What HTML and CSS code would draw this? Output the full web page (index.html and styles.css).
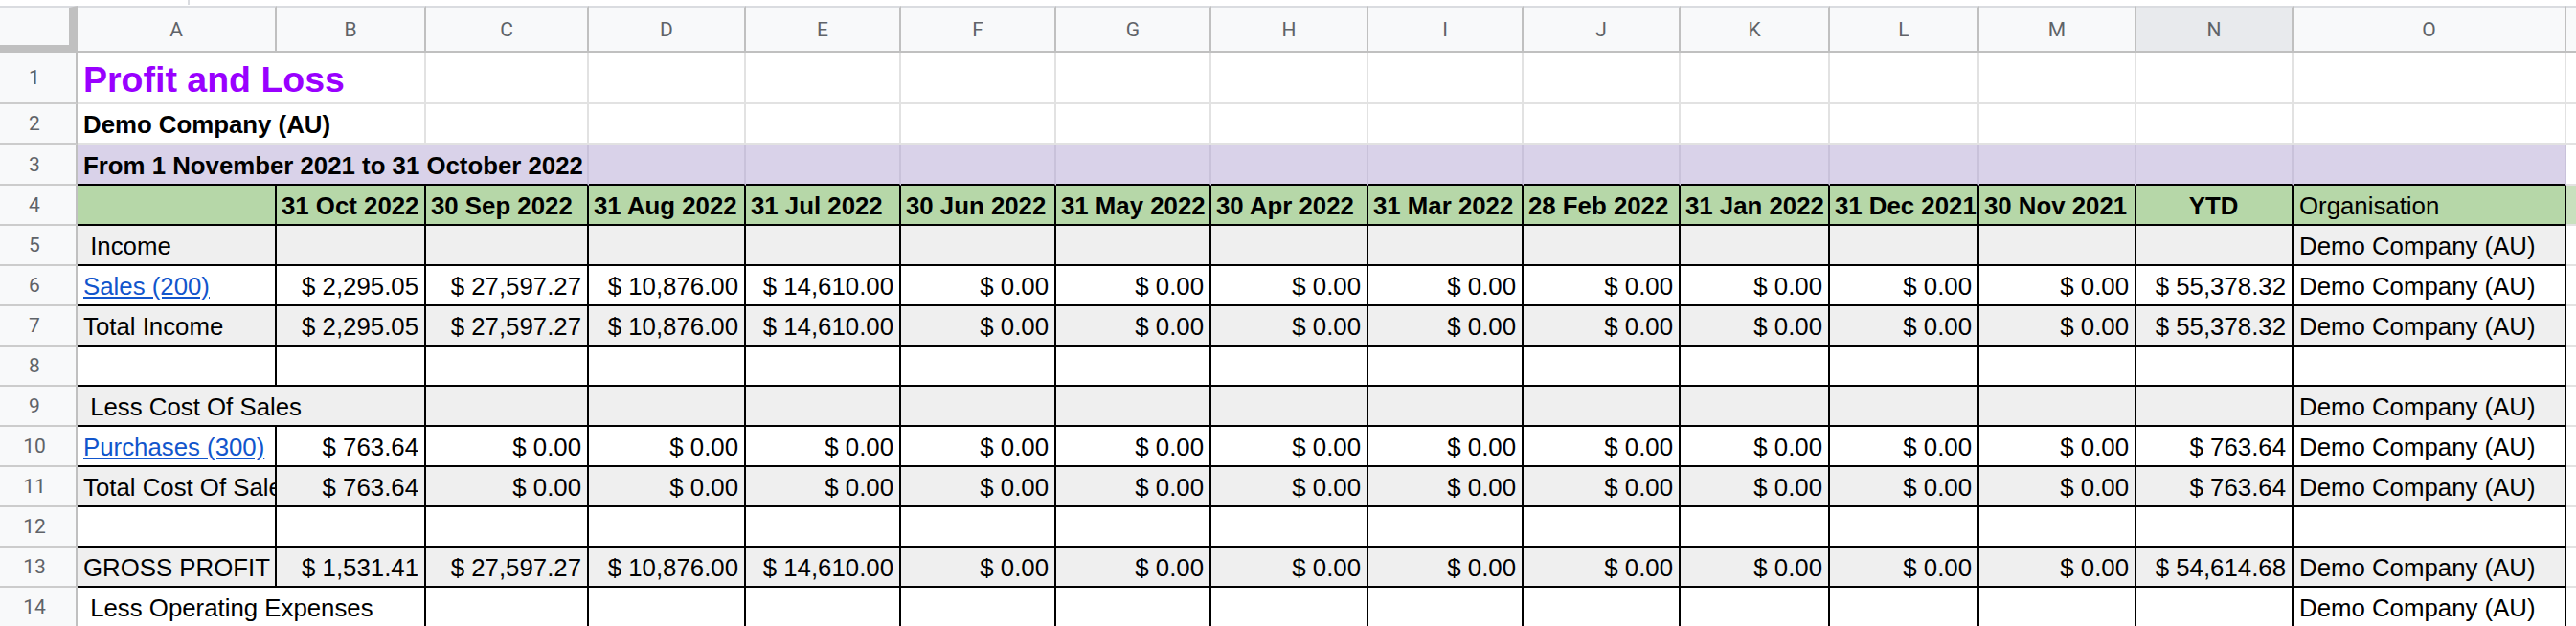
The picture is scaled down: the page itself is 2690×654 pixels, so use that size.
FILE: index.html
```html
<!DOCTYPE html>
<html lang="en">
<head>
<meta charset="utf-8">
<title>Profit and Loss</title>
<link rel="stylesheet" href="styles.css">
</head>
<body>
<div class="topbar"><div class="topbar-gap"></div><div class="topbar-tick"></div></div>
<div class="sheet">
  <!-- column headers -->
  <div class="corner"></div>
  <div class="colh">A</div><div class="colh">B</div><div class="colh">C</div><div class="colh">D</div><div class="colh">E</div><div class="colh">F</div><div class="colh">G</div><div class="colh">H</div><div class="colh">I</div><div class="colh">J</div><div class="colh">K</div><div class="colh">L</div><div class="colh">M</div><div class="colh sel">N</div><div class="colh">O</div><div class="colh px"></div>

  <!-- row 1 -->
  <div class="rh">1</div>
  <div class="cell title span2">Profit and Loss</div>
  <div class="cell"></div><div class="cell"></div><div class="cell"></div><div class="cell"></div><div class="cell"></div><div class="cell"></div><div class="cell"></div><div class="cell"></div><div class="cell"></div><div class="cell"></div><div class="cell"></div><div class="cell"></div><div class="cell"></div>
  <div class="cell px"></div>

  <!-- row 2 -->
  <div class="rh">2</div>
  <div class="cell bold span2">Demo Company (AU)</div>
  <div class="cell"></div><div class="cell"></div><div class="cell"></div><div class="cell"></div><div class="cell"></div><div class="cell"></div><div class="cell"></div><div class="cell"></div><div class="cell"></div><div class="cell"></div><div class="cell"></div><div class="cell"></div><div class="cell"></div>
  <div class="cell px"></div>

  <!-- row 3 -->
  <div class="rh">3</div>
  <div class="cell pu bold span3">From 1 November 2021 to 31 October 2022</div>
  <div class="cell pu"></div><div class="cell pu"></div><div class="cell pu"></div><div class="cell pu"></div><div class="cell pu"></div><div class="cell pu"></div><div class="cell pu"></div><div class="cell pu"></div><div class="cell pu"></div><div class="cell pu"></div><div class="cell pu"></div><div class="cell pu"></div>
  <div class="cell px"></div>

  <!-- row 4 -->
  <div class="rh">4</div>
  <div class="cell k hd"></div>
  <div class="cell k hd">31 Oct 2022</div>
  <div class="cell k hd">30 Sep 2022</div>
  <div class="cell k hd">31 Aug 2022</div>
  <div class="cell k hd">31 Jul 2022</div>
  <div class="cell k hd">30 Jun 2022</div>
  <div class="cell k hd">31 May 2022</div>
  <div class="cell k hd">30 Apr 2022</div>
  <div class="cell k hd">31 Mar 2022</div>
  <div class="cell k hd">28 Feb 2022</div>
  <div class="cell k hd">31 Jan 2022</div>
  <div class="cell k hd">31 Dec 2021</div>
  <div class="cell k hd">30 Nov 2021</div>
  <div class="cell k hd ctr">YTD</div>
  <div class="cell k hd org">Organisation</div>
  <div class="cell px hdp"></div>

  <!-- row 5 -->
  <div class="rh">5</div>
  <div class="cell k gy"> Income</div>
  <div class="cell k gy"></div><div class="cell k gy"></div><div class="cell k gy"></div><div class="cell k gy"></div><div class="cell k gy"></div><div class="cell k gy"></div><div class="cell k gy"></div><div class="cell k gy"></div><div class="cell k gy"></div><div class="cell k gy"></div><div class="cell k gy"></div><div class="cell k gy"></div><div class="cell k gy"></div>
  <div class="cell k gy">Demo Company (AU)</div>
  <div class="cell px"></div>

  <!-- row 6 -->
  <div class="rh">6</div>
  <div class="cell k"><a class="lnk" href="#">Sales (200)</a></div>
  <div class="cell k num">$ 2,295.05</div>
  <div class="cell k num">$ 27,597.27</div>
  <div class="cell k num">$ 10,876.00</div>
  <div class="cell k num">$ 14,610.00</div>
  <div class="cell k num">$ 0.00</div><div class="cell k num">$ 0.00</div><div class="cell k num">$ 0.00</div><div class="cell k num">$ 0.00</div><div class="cell k num">$ 0.00</div><div class="cell k num">$ 0.00</div><div class="cell k num">$ 0.00</div><div class="cell k num">$ 0.00</div>
  <div class="cell k num">$ 55,378.32</div>
  <div class="cell k">Demo Company (AU)</div>
  <div class="cell px"></div>

  <!-- row 7 -->
  <div class="rh">7</div>
  <div class="cell k gy">Total Income</div>
  <div class="cell k gy num">$ 2,295.05</div>
  <div class="cell k gy num">$ 27,597.27</div>
  <div class="cell k gy num">$ 10,876.00</div>
  <div class="cell k gy num">$ 14,610.00</div>
  <div class="cell k gy num">$ 0.00</div><div class="cell k gy num">$ 0.00</div><div class="cell k gy num">$ 0.00</div><div class="cell k gy num">$ 0.00</div><div class="cell k gy num">$ 0.00</div><div class="cell k gy num">$ 0.00</div><div class="cell k gy num">$ 0.00</div><div class="cell k gy num">$ 0.00</div>
  <div class="cell k gy num">$ 55,378.32</div>
  <div class="cell k gy">Demo Company (AU)</div>
  <div class="cell px"></div>

  <!-- row 8 -->
  <div class="rh">8</div>
  <div class="cell k"></div><div class="cell k"></div><div class="cell k"></div><div class="cell k"></div><div class="cell k"></div><div class="cell k"></div><div class="cell k"></div><div class="cell k"></div><div class="cell k"></div><div class="cell k"></div><div class="cell k"></div><div class="cell k"></div><div class="cell k"></div><div class="cell k"></div><div class="cell k"></div>
  <div class="cell px"></div>

  <!-- row 9 -->
  <div class="rh">9</div>
  <div class="cell k gy span2"> Less Cost Of Sales</div>
  <div class="cell k gy"></div><div class="cell k gy"></div><div class="cell k gy"></div><div class="cell k gy"></div><div class="cell k gy"></div><div class="cell k gy"></div><div class="cell k gy"></div><div class="cell k gy"></div><div class="cell k gy"></div><div class="cell k gy"></div><div class="cell k gy"></div><div class="cell k gy"></div>
  <div class="cell k gy">Demo Company (AU)</div>
  <div class="cell px"></div>

  <!-- row 10 -->
  <div class="rh">10</div>
  <div class="cell k"><a class="lnk" href="#">Purchases (300)</a></div>
  <div class="cell k num">$ 763.64</div>
  <div class="cell k num">$ 0.00</div><div class="cell k num">$ 0.00</div><div class="cell k num">$ 0.00</div><div class="cell k num">$ 0.00</div><div class="cell k num">$ 0.00</div><div class="cell k num">$ 0.00</div><div class="cell k num">$ 0.00</div><div class="cell k num">$ 0.00</div><div class="cell k num">$ 0.00</div><div class="cell k num">$ 0.00</div><div class="cell k num">$ 0.00</div>
  <div class="cell k num">$ 763.64</div>
  <div class="cell k">Demo Company (AU)</div>
  <div class="cell px"></div>

  <!-- row 11 -->
  <div class="rh">11</div>
  <div class="cell k gy">Total Cost Of Sales</div>
  <div class="cell k gy num">$ 763.64</div>
  <div class="cell k gy num">$ 0.00</div><div class="cell k gy num">$ 0.00</div><div class="cell k gy num">$ 0.00</div><div class="cell k gy num">$ 0.00</div><div class="cell k gy num">$ 0.00</div><div class="cell k gy num">$ 0.00</div><div class="cell k gy num">$ 0.00</div><div class="cell k gy num">$ 0.00</div><div class="cell k gy num">$ 0.00</div><div class="cell k gy num">$ 0.00</div><div class="cell k gy num">$ 0.00</div>
  <div class="cell k gy num">$ 763.64</div>
  <div class="cell k gy">Demo Company (AU)</div>
  <div class="cell px"></div>

  <!-- row 12 -->
  <div class="rh">12</div>
  <div class="cell k"></div><div class="cell k"></div><div class="cell k"></div><div class="cell k"></div><div class="cell k"></div><div class="cell k"></div><div class="cell k"></div><div class="cell k"></div><div class="cell k"></div><div class="cell k"></div><div class="cell k"></div><div class="cell k"></div><div class="cell k"></div><div class="cell k"></div><div class="cell k"></div>
  <div class="cell px"></div>

  <!-- row 13 -->
  <div class="rh">13</div>
  <div class="cell k gy">GROSS PROFIT</div>
  <div class="cell k gy num">$ 1,531.41</div>
  <div class="cell k gy num">$ 27,597.27</div>
  <div class="cell k gy num">$ 10,876.00</div>
  <div class="cell k gy num">$ 14,610.00</div>
  <div class="cell k gy num">$ 0.00</div><div class="cell k gy num">$ 0.00</div><div class="cell k gy num">$ 0.00</div><div class="cell k gy num">$ 0.00</div><div class="cell k gy num">$ 0.00</div><div class="cell k gy num">$ 0.00</div><div class="cell k gy num">$ 0.00</div><div class="cell k gy num">$ 0.00</div>
  <div class="cell k gy num">$ 54,614.68</div>
  <div class="cell k gy">Demo Company (AU)</div>
  <div class="cell px"></div>

  <!-- row 14 -->
  <div class="rh">14</div>
  <div class="cell k span2"> Less Operating Expenses</div>
  <div class="cell k"></div><div class="cell k"></div><div class="cell k"></div><div class="cell k"></div><div class="cell k"></div><div class="cell k"></div><div class="cell k"></div><div class="cell k"></div><div class="cell k"></div><div class="cell k"></div><div class="cell k"></div><div class="cell k"></div>
  <div class="cell k">Demo Company (AU)</div>
  <div class="cell px"></div>
</div>
</body>
</html>
```

FILE: styles.css
```css
html, body {
  margin: 0;
  padding: 0;
  background: #ffffff;
}

body {
  width: 2690px;
  height: 654px;
  overflow: hidden;
  font-family: "Liberation Sans", Arial, sans-serif;
}

.topbar {
  height: 6px;
  display: flex;
}

.topbar-gap {
  width: 196px;
}

.topbar-tick {
  width: 2px;
  height: 5px;
  background: #dadce0;
}

.sheet {
  display: grid;
  grid-template-columns: 81px 208px 156px 170px 164px 162px 162px 162px 164px 162px 164px 156px 156px 164px 164px 285px 200px;
  grid-template-rows: 49px 54px 42px 43px repeat(11, 42px);
}

/* headers */
.corner {
  box-sizing: border-box;
  background: #f8f9fa;
  border-top: 2px solid #dadce0;
  border-right: 9px solid #c0c0c0;
  border-bottom: 8px solid #c0c0c0;
}

.colh {
  box-sizing: border-box;
  background: #f8f9fa;
  border-top: 2px solid #dadce0;
  border-right: 2px solid #c0c0c0;
  border-bottom: 2px solid #c0c0c0;
  display: flex;
  align-items: center;
  justify-content: center;
  font-family: Roboto, "Liberation Sans", sans-serif;
  font-size: 21px;
  color: #5f6368;
}

.colh.sel {
  background: #e8eaed;
}

.colh.px {
  border-right: none;
}

.rh {
  box-sizing: border-box;
  background: #f8f9fa;
  border-right: 2px solid #c0c0c0;
  border-bottom: 2px solid #cccccc;
  display: flex;
  align-items: center;
  justify-content: center;
  padding-right: 7px;
  font-family: Roboto, "Liberation Sans", sans-serif;
  font-size: 21px;
  color: #5f6368;
}

/* cells */
.cell {
  box-sizing: border-box;
  border-right: 2px solid #e2e2e2;
  border-bottom: 2px solid #e2e2e2;
  display: flex;
  align-items: flex-end;
  padding: 0 6px 4px 6px;
  font-size: 25.8px;
  line-height: 30px;
  white-space: pre;
  overflow: hidden;
  color: #000000;
  background: #ffffff;
}

.cell.px {
  border-right: none;
}

.span2 {
  grid-column: span 2;
}

.span3 {
  grid-column: span 3;
}

.title {
  font-size: 37.5px;
  line-height: 44px;
  font-weight: bold;
  color: #9900ff;
  padding-bottom: 2px;
}

.bold {
  font-weight: bold;
}

.pu {
  background: #d9d2e9;
  border-right-color: #c9c2da;
  border-bottom-color: #000000;
}

.k {
  border-right-color: #000000;
  border-bottom-color: #000000;
}

.gy {
  background: #efefef;
}

.hd {
  background: #b6d7a8;
  font-weight: bold;
  padding-left: 5px;
}

.hd.org {
  font-weight: normal;
  padding-left: 6px;
}

.hdp {
  background: #c9e0be;
}

.ctr {
  justify-content: center;
}

.num {
  justify-content: flex-end;
}

.lnk {
  color: #1155cc;
  text-decoration: underline;
}
```
